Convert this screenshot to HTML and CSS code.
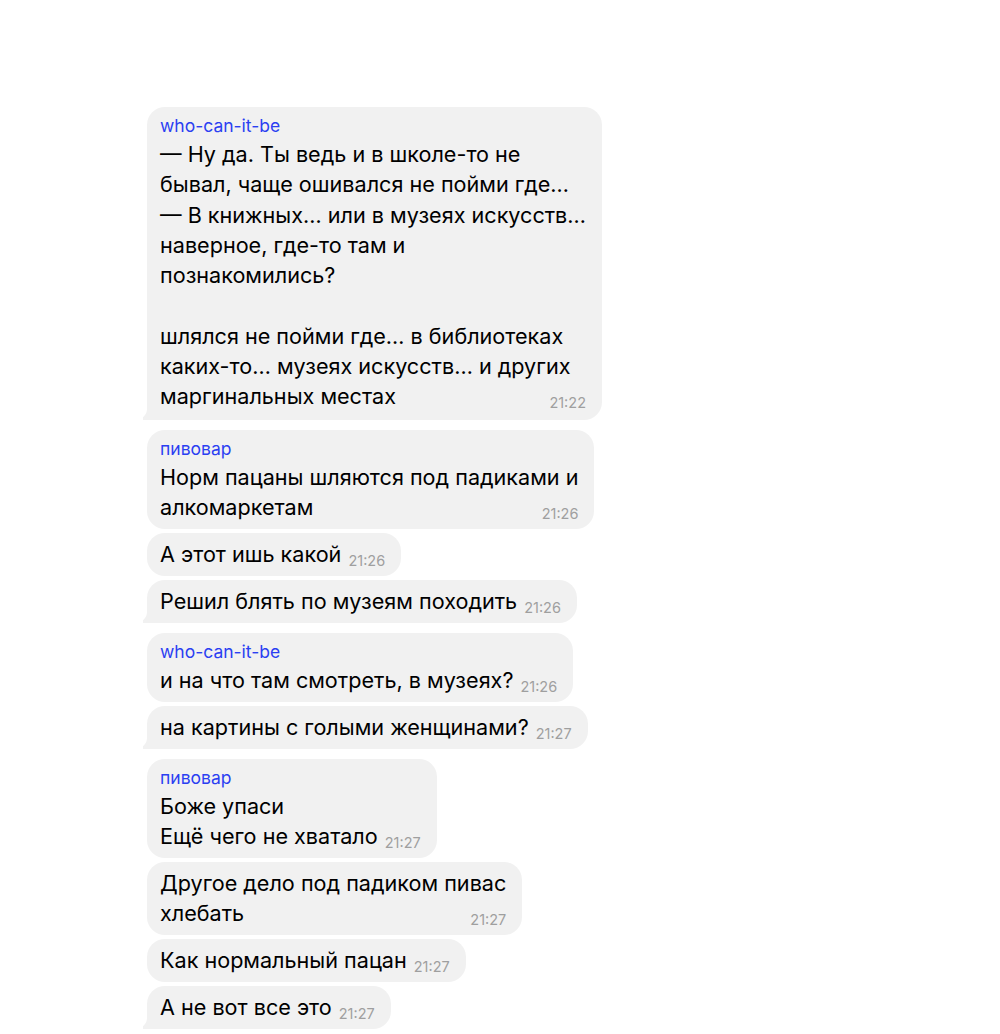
FILE: index.html
```html
<!DOCTYPE html>
<html lang="ru">
<head>
<meta charset="utf-8">
<title>Chat</title>
<link rel="stylesheet" href="styles.css">
</head>
<body>
<div class="chat">
  <div class="group">
    <div class="bubble tail long">
      <div class="name">who-can-it-be</div>
      <div class="text">— Ну да. Ты ведь и в школе-то не<br>бывал, чаще ошивался не пойми где…<br>— В книжных… или в музеях искусств…<br>наверное, где-то там и<br>познакомились?<br><br>шлялся не пойми где… в библиотеках<br>каких-то… музеях искусств… и других<br>маргинальных местах<span class="time">21:22</span></div>
    </div>
  </div>
  <div class="group">
    <div class="bubble">
      <div class="name">пивовар</div>
      <div class="text">Норм пацаны шляются под падиками и<br>алкомаркетам<span class="time">21:26</span></div>
    </div>
    <div class="bubble">
      <div class="text">А этот ишь какой<span class="time">21:26</span></div>
    </div>
    <div class="bubble tail">
      <div class="text">Решил блять по музеям походить<span class="time">21:26</span></div>
    </div>
  </div>
  <div class="group">
    <div class="bubble">
      <div class="name">who-can-it-be</div>
      <div class="text">и на что там смотреть, в музеях?<span class="time">21:26</span></div>
    </div>
    <div class="bubble tail">
      <div class="text">на картины с голыми женщинами?<span class="time">21:27</span></div>
    </div>
  </div>
  <div class="group">
    <div class="bubble">
      <div class="name">пивовар</div>
      <div class="text">Боже упаси<br>Ещё чего не хватало<span class="time">21:27</span></div>
    </div>
    <div class="bubble">
      <div class="text">Другое дело под падиком пивас<br>хлебать<span class="time">21:27</span></div>
    </div>
    <div class="bubble">
      <div class="text">Как нормальный пацан<span class="time">21:27</span></div>
    </div>
    <div class="bubble tail">
      <div class="text">А не вот все это<span class="time">21:27</span></div>
    </div>
  </div>
</div>
</body>
</html>
```

FILE: styles.css
```css
html, body {
  margin: 0;
  background: #ffffff;
}

body {
  font-family: Inter, "Liberation Sans", Arial, sans-serif;
  color: #000;
}

.chat {
  display: flex;
  flex-direction: column;
  align-items: flex-start;
  gap: 10px;
  padding: 107px 0 0 147px;
}

.group {
  display: flex;
  flex-direction: column;
  align-items: flex-start;
  gap: 4px;
}

.bubble {
  position: relative;
  z-index: 0;
  display: flow-root;
  background: #f1f1f1;
  border-radius: 18px;
  padding: 6px 16px 7px 13px;
}

.bubble.long {
  padding-bottom: 8px;
}

.bubble.tail {
  border-bottom-left-radius: 6px;
}

.bubble.tail::before {
  content: "";
  position: absolute;
  z-index: -1;
  left: -4px;
  bottom: 0;
  width: 16px;
  height: 18px;
  background: #f1f1f1;
}

.bubble.tail::after {
  content: "";
  position: absolute;
  z-index: -1;
  left: -12px;
  bottom: 0;
  width: 12px;
  height: 18px;
  background: #ffffff;
  border-bottom-right-radius: 12px 11px;
}

.name {
  font-size: 17.5px;
  line-height: 26px;
  color: #2b3ff2;
  white-space: nowrap;
}

.text {
  font-size: 21.6px;
  line-height: 30px;
  white-space: nowrap;
}

.long .text {
  line-height: 30.3px;
}

.time {
  float: right;
  font-size: 14.5px;
  line-height: 16px;
  margin: 14px 0 0 7px;
  color: #9f9f9f;
}
```
